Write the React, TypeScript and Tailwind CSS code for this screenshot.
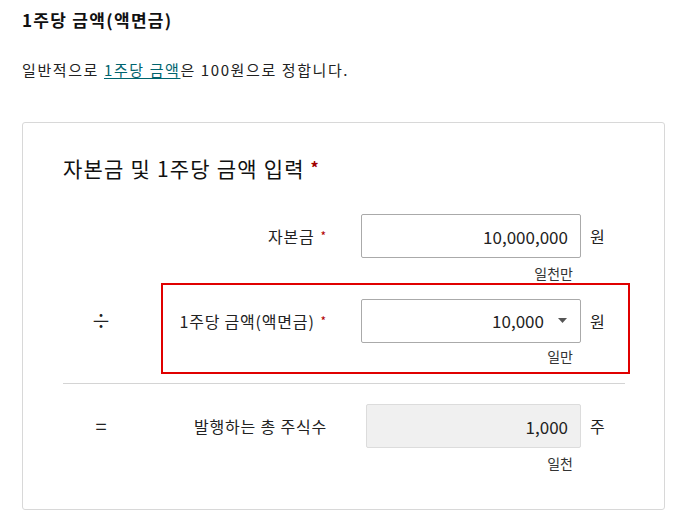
import { ChangeEvent, useState } from 'react'

const font = { fontFamily: '"Noto Sans CJK KR", "Noto Sans", sans-serif' }

function Row({ op, label, required, boxed, children, unit, hint, className }: {
    op?: string, label: string, required?: boolean, boxed?: boolean,
    children: React.ReactNode, unit: string, hint: string, className?: string
}) {
    return (
        <div className={`flex items-start ${className ?? ''}`}>
            <div className={`w-[98px] h-[44px] flex items-center justify-center pr-[22px] text-[20px] text-[#222] ${boxed ? 'mt-[16px]' : 'mt-[2px]'}`}>{op}</div>
            <div className={`w-[469px] border-2 ${boxed ? 'border-[#e00000] pt-[14px] pb-[6px]' : 'border-transparent'}`}>
                <div className="flex items-center">
                    <div className="w-[164px] h-[22px] leading-[22px] text-right text-[16px] tracking-[0.8px] text-[#222] whitespace-nowrap">
                        {label}{required && <span className="relative -top-[2px] leading-none text-[#b00000] text-[12px] ml-[6px]">*</span>}
                    </div>
                    <div className="ml-[34px] w-[220px]">{children}</div>
                    <div className="ml-[9px] text-[16px] text-[#222]">{unit}</div>
                </div>
                <div className="flex">
                    <div className={`ml-[198px] w-[220px] text-right pr-[8px] text-[14px] text-[#333] leading-[20px] ${boxed ? 'mt-[3px]' : 'mt-[5px]'}`}>{hint}</div>
                </div>
            </div>
        </div>
    )
}

export default function App() {
    const [capital, setCapital] = useState('10,000,000')
    const [par, setPar] = useState('10000')

    const capNum = Number(capital.replace(/,/g, '')) || 0
    const shares = Number(par) ? Math.floor(capNum / Number(par)) : 0

    return (
        <main className="bg-white min-h-[517px] pl-[22px] pt-[8px] pb-[6px]" style={font}>
            <h1 className="text-[17px] font-bold tracking-[1.3px] text-[#111] leading-[24px]">1주당 금액(액면금)</h1>
            <p className="mt-[26px] text-[15px] tracking-[1.6px] text-[#222] leading-[24px]">
                일반적으로 <a href="#" className="text-[#00646e] underline underline-offset-2">1주당 금액</a>은 100원으로 정합니다.
            </p>
            <section className="mt-[40px] w-[643px] h-[388px] border border-[#d8d8d8] rounded-[3px] pl-[40px] pt-[30px]">
                <h2 className="h-[30px] text-[21px] tracking-[1.2px] text-[#111] leading-[30px]">
                    자본금 및 1주당 금액 입력 <span className="relative -top-[3px] leading-none text-[#a00000] text-[16px] font-bold">*</span>
                </h2>
                <Row label="자본금" required unit="원" hint="일천만" className="mt-[29px]">
                    <input
                        value={capital}
                        onChange={(e: ChangeEvent<HTMLInputElement>) => setCapital(e.target.value)}
                        className="w-full h-[44px] border border-[#aaa] rounded-[2px] text-right pr-[12px] text-[17px] text-[#222] outline-none"
                        style={font}
                    />
                </Row>
                <Row op="÷" label="1주당 금액(액면금)" required boxed unit="원" hint="일만" className="-mt-[2px]">
                    <div className="relative">
                        <select
                            value={par}
                            onChange={e => setPar(e.target.value)}
                            className="w-full h-[44px] border border-[#aaa] rounded-[2px] appearance-none text-right pr-[36px] text-[17px] text-[#222] bg-white outline-none"
                            style={{ ...font, textAlignLast: 'right' }}
                        >
                            <option value="100">100</option>
                            <option value="500">500</option>
                            <option value="1000">1,000</option>
                            <option value="5000">5,000</option>
                            <option value="10000">10,000</option>
                        </select>
                        <svg className="absolute right-[14px] top-[19px] pointer-events-none" width="9" height="5" viewBox="0 0 9 5">
                            <path d="M0 0h9L4.5 5z" fill="#555" />
                        </svg>
                    </div>
                </Row>
                <div className="w-[562px] h-px bg-[#d4d4d4] mt-[9px]" />
                <Row op="=" label="발행하는 총 주식수" unit="주" hint="일천" className="mt-[18px]">
                    <input
                        readOnly
                        value={shares.toLocaleString('en-US')}
                        className="w-[215px] ml-[5px] h-[44px] border border-[#dcdcdc] bg-[#f0f0f0] rounded-[2px] text-right pr-[12px] text-[17px] text-[#222] outline-none"
                        style={font}
                    />
                </Row>
            </section>
        </main>
    )
}
